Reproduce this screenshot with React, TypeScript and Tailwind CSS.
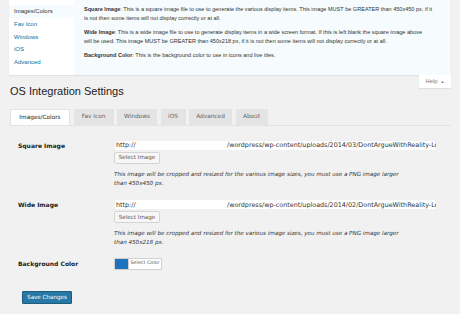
import React from "react";

const helpTabs = ["Images/Colors", "Fav Icon", "Windows", "iOS", "Advanced"];
const tabs = ["Images/Colors", "Fav Icon", "Windows", "iOS", "Advanced", "About"];

function UrlField({ path }: { path: string }) {
  return (
    <div className="flex h-[11px] w-[322px] items-center overflow-hidden whitespace-nowrap bg-white pl-[2px] text-[6.4px] leading-none text-[#333] shadow-[inset_0_0_0_0.5px_#e2e2e2]">
      <span className="w-[111px] shrink-0">http://</span>
      <span className="shrink-0">{path}</span>
    </div>
  );
}

function SelectButton() {
  return (
    <div className="mt-[1px] flex h-[12px] w-[46px] items-center justify-center rounded-[2px] border border-[#d4d4d4] bg-[#f7f7f7] text-[5.6px] leading-none text-[#555]">
      Select Image
    </div>
  );
}

export default function App() {
  const verdana = { fontFamily: "Verdana, 'DejaVu Sans', sans-serif" };
  return (
    <div
      className="h-[314px] w-[460px] overflow-hidden bg-[#f1f1f1] pl-[9px] pr-[9px] text-[#333]"
      style={{ fontFamily: "'Liberation Sans', Arial, sans-serif" }}
    >
      {/* Help panel */}
      <div className="flex h-[75px] w-[441px] shadow-[0_1px_1px_rgba(0,0,0,0.06)]">
        <div className="w-[65px] bg-white pt-[5px]">
          {helpTabs.map((t, i) => (
            <div
              key={t}
              className={
                "flex h-[12.7px] items-center pl-[5px] text-[6px] leading-none " +
                (i === 0 ? "bg-[#f6fbfd] text-[#333]" : "text-[#0074a2]")
              }
            >
              {t}
            </div>
          ))}
        </div>
        <div className="flex-1 bg-[#f6fbfd] pl-[10px] pr-[15px] pt-[4.5px] text-[5.55px] leading-[9.3px] text-[#333]">
          <p>
            <b>Square Image</b>: This is a square image file to use to generate the various display items. This image MUST be GREATER than 450x450 px, if it is not then some items will not display correctly or at all.
          </p>
          <p className="mt-[4.5px]">
            <b>Wide Image</b>: This is a wide image file to use to generate display items in a wide screen format. If this is left blank the square image above
            <br />
            will be used. This image MUST be GREATER than 450x218 px, if it is not then some items will not display correctly or at all.
          </p>
          <p className="mt-[4.5px]">
            <b>Background Color</b>: This is the background color to use in icons and live tiles.
          </p>
        </div>
      </div>
      <div className="flex w-[442px] justify-end">
        <div className="flex h-[13px] w-[32px] items-center justify-center gap-[3px] bg-white text-[5.8px] leading-none text-[#777] shadow-[0_1px_1px_rgba(0,0,0,0.08)]">
          <span>Help</span>
          <span className="text-[4px]">▲</span>
        </div>
      </div>

      {/* Title */}
      <h2 className="mt-[-4px] pl-[1px] text-[11px] leading-[14px] text-[#222]">OS Integration Settings</h2>

      {/* Tabs */}
      <div className="mt-[12px] flex h-[16px] w-[442px] items-end gap-[3.5px] border-b border-[#e3e3e3] pl-[1px]" style={verdana}>
        {tabs.map((t, i) => (
          <div
            key={t}
            className={
              "flex h-[16px] items-center justify-center text-[5.8px] leading-none " +
              (i === 0
                ? "bg-white text-[#222] border border-b-0 border-[#e3e3e3]"
                : "bg-[#e4e4e4] text-[#666]")
            }
            style={{ width: [60, 40, 40, 25, 43, 32][i] }}
          >
            {t}
          </div>
        ))}
      </div>

      {/* Form */}
      <div style={verdana} className="text-[#222]">
        <div className="mt-[14px] flex">
          <div className="w-[105px] pl-[9px] pt-[2px] text-[6px] font-bold leading-[8px]">Square Image</div>
          <div>
            <UrlField path="/wordpress/wp-content/uploads/2014/03/DontArgueWithReality-Logo.png" />
            <SelectButton />
            <p className="mt-[6px] text-[5.6px] italic leading-[8.7px] text-[#333]">
              This image will be cropped and resized for the various image sizes, you must use a PNG image larger
              <br />
              than 450x450 px.
            </p>
          </div>
        </div>

        <div className="mt-[12px] flex">
          <div className="w-[105px] pl-[9px] pt-[2px] text-[6px] font-bold leading-[8px]">Wide Image</div>
          <div>
            <UrlField path="/wordpress/wp-content/uploads/2014/02/DontArgueWithReality-Logo.png" />
            <SelectButton />
            <p className="mt-[6px] text-[5.6px] italic leading-[8.7px] text-[#333]">
              This image will be cropped and resized for the various image sizes, you must use a PNG image larger
              <br />
              than 450x218 px.
            </p>
          </div>
        </div>

        <div className="mt-[11px] flex">
          <div className="w-[105px] pl-[9px] pt-[2px] text-[6px] font-bold leading-[8px]">Background Color</div>
          <div className="flex h-[12px] w-[48px] overflow-hidden rounded-[1px] border border-[#d0d0d0] bg-white">
            <div className="w-[13px] bg-[#1e73be]" />
            <div className="flex flex-1 items-center justify-center border-l border-[#d0d0d0] text-[4.8px] leading-none text-[#555]">
              Select Color
            </div>
          </div>
        </div>

        <div className="mt-[21px] pl-[13px]">
          <div className="flex h-[13px] w-[50px] items-center justify-center rounded-[1px] border border-[#1c5d80] bg-[#2679a6] text-[5.6px] leading-none text-white">
            Save Changes
          </div>
        </div>
      </div>
    </div>
  );
}
